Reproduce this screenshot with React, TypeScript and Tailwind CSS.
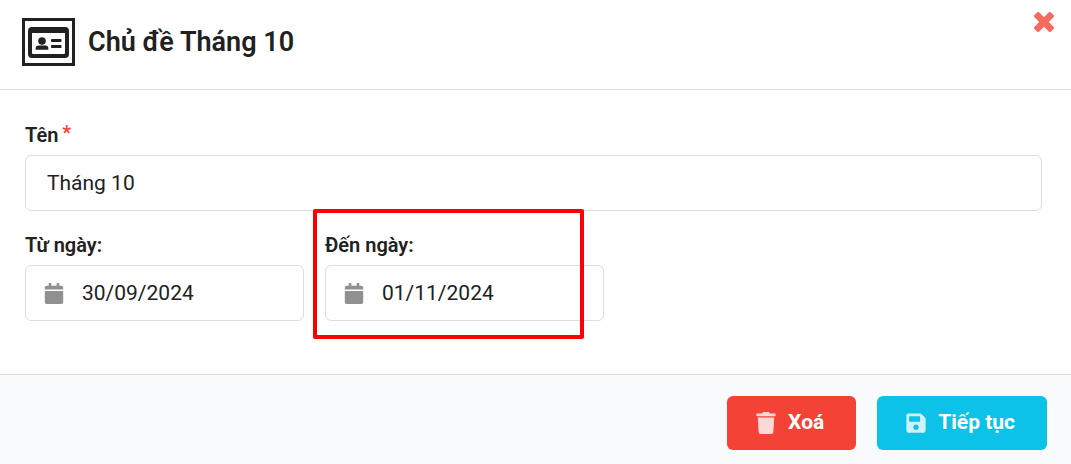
import React, { FunctionComponent, ReactNode, useState } from "react";
import { FaCalendar, FaSave, FaTrash } from "react-icons/fa";

type FieldProps = {
  id: string;
  value: string;
  onChange: (value: string) => void;
};

const TopicIcon: FunctionComponent = () => (
  <div className="flex h-12 w-[53px] items-center justify-center border-3 border-[#212121]">
    <svg width="41" height="31" viewBox="0 0 41 31" fill="#212121" aria-hidden="true">
      <path
        fillRule="evenodd"
        d="M4 0h33a4 4 0 0 1 4 4v23a4 4 0 0 1-4 4H4a4 4 0 0 1-4-4V4a4 4 0 0 1 4-4ZM4 6V26a1 1 0 0 0 1 1h31a1 1 0 0 0 1-1V6Z"
      />
      <circle cx="14" cy="14" r="3.800" />
      <path d="M10.500 18.500h7a2.800 2.800 0 0 1 2.800 2.800v1.400H7.700v-1.400a2.800 2.800 0 0 1 2.800-2.800Z" />
      <rect x="23" y="12" width="10.500" height="3" rx="0.800" />
      <rect x="23" y="18" width="10.500" height="3" rx="0.800" />
    </svg>
  </div>
);

const CloseIcon: FunctionComponent = () => (
  <svg width="20" height="20" viewBox="0 0 20 20" aria-hidden="true">
    <path
      fill="currentColor"
      d="M5.300.5 10 5.200 14.700.5a1.600 1.600 0 0 1 2.300 0L19.500 3a1.600 1.600 0 0 1 0 2.300L14.800 10l4.700 4.700a1.600 1.600 0 0 1 0 2.300L17 19.500a1.600 1.600 0 0 1-2.300 0L10 14.800l-4.700 4.700a1.600 1.600 0 0 1-2.300 0L.5 17a1.600 1.600 0 0 1 0-2.300L5.200 10 .5 5.300a1.600 1.600 0 0 1 0-2.300L3 .5a1.600 1.600 0 0 1 2.300 0Z"
    />
  </svg>
);

const Label: FunctionComponent<{ htmlFor: string; children: ReactNode }> = ({
  htmlFor,
  children,
}) => (
  <label htmlFor={htmlFor} className="mb-2 flex gap-1 text-xl leading-6 font-semibold">
    {children}
  </label>
);

const DateInput: FunctionComponent<FieldProps> = ({ id, value, onChange }) => (
  <div className="flex h-14 items-center gap-4 rounded-md border border-[#dcdddd] px-4">
    <FaCalendar className="h-[21px] w-6 shrink-0 text-[#909090]" aria-hidden="true" />
    <input
      id={id}
      type="text"
      value={value}
      onChange={(e) => onChange(e.target.value)}
      className="w-full min-w-0 text-[21px] leading-7 outline-none"
    />
  </div>
);

const App: FunctionComponent = () => {
  const [name, setName] = useState("Tháng 10");
  const [from, setFrom] = useState("30/09/2024");
  const [to, setTo] = useState("01/11/2024");

  return (
    <form
      className="flex min-h-screen flex-col bg-white font-[Roboto,sans-serif] text-[#212121]"
      onSubmit={(e) => e.preventDefault()}
    >
      <header className="flex items-start justify-between border-b border-[#dcdddd] pr-[17px] pb-[23px] pl-[22px]">
        <div className="flex items-center gap-[13px] pt-[18px]">
          <TopicIcon />
          <h1 className="text-[27px] leading-8 font-semibold">Chủ đề Tháng 10</h1>
        </div>
        <button
          type="button"
          aria-label="Đóng"
          className="mt-3 cursor-pointer text-[#f76a60]"
        >
          <CloseIcon />
        </button>
      </header>

      <main className="flex-1 pt-[33px] pr-[29px] pb-[53px] pl-[25px]">
        <Label htmlFor="name">
          Tên
          <span className="leading-5 font-medium text-[#f44336]">*</span>
        </Label>
        <input
          id="name"
          type="text"
          required
          value={name}
          onChange={(e) => setName(e.target.value)}
          className="h-14 w-full rounded-md border border-[#dcdddd] px-[21px] text-[21px] leading-7 outline-none"
        />

        <div className="mt-[22px] flex gap-[21px]">
          <div className="w-[279px]">
            <Label htmlFor="from">Từ ngày:</Label>
            <DateInput id="from" value={from} onChange={setFrom} />
          </div>
          <div className="relative w-[279px]">
            <Label htmlFor="to">Đến ngày:</Label>
            <DateInput id="to" value={to} onChange={setTo} />
            {/* highlight over the end date */}
            <div className="pointer-events-none absolute -top-6 right-5 -bottom-[18px] -left-3 rounded-xs border-4 border-[#ff0000]" />
          </div>
        </div>
      </main>

      <footer className="flex justify-end gap-[21px] border-t border-[#dcdddd] bg-[#f9fafb] pt-[21px] pr-6 pb-[14px]">
        <button
          type="button"
          className="flex h-[54px] cursor-pointer items-center gap-3 rounded-md bg-[#f44336] pr-8 pl-[29px] text-[21px] font-bold text-white"
        >
          <FaTrash className="h-[22px] w-5 opacity-80" aria-hidden="true" />
          Xoá
        </button>
        <button
          type="submit"
          className="flex h-[54px] cursor-pointer items-center gap-3 rounded-md bg-[#0cc2e6] pr-8 pl-[29px] text-[21px] font-bold text-white"
        >
          <FaSave className="h-[22px] w-5 opacity-80" aria-hidden="true" />
          Tiếp tục
        </button>
      </footer>
    </form>
  );
};

export default App;
